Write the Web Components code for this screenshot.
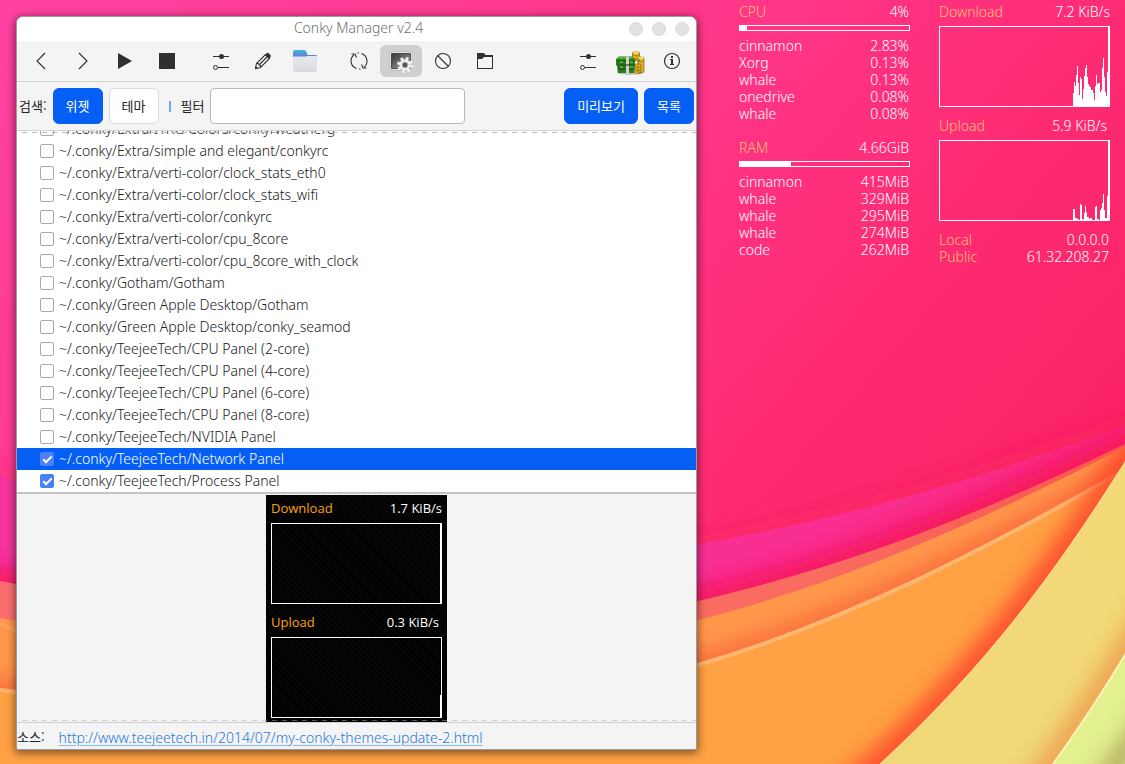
<!DOCTYPE html>
<html lang="ko">
<head>
<meta charset="utf-8">
<title>Conky Manager v2.4</title>
<style>
  html, body { margin: 0; height: 100%; }
  body {
    font: 300 14px/17px "Noto Sans", "Noto Sans CJK KR", sans-serif;
    color: #202020;
    overflow: hidden;
  }
</style>
</head>
<body>
<desk-top>
  <app-window heading="Conky Manager v2.4">
    <tool-bar></tool-bar>
    <filter-bar></filter-bar>
    <widget-list>
      <widget-row>~/.conky/Extra/ITRG Colors/conky/weatherg</widget-row>
      <widget-row>~/.conky/Extra/simple and elegant/conkyrc</widget-row>
      <widget-row>~/.conky/Extra/verti-color/clock_stats_eth0</widget-row>
      <widget-row>~/.conky/Extra/verti-color/clock_stats_wifi</widget-row>
      <widget-row>~/.conky/Extra/verti-color/conkyrc</widget-row>
      <widget-row>~/.conky/Extra/verti-color/cpu_8core</widget-row>
      <widget-row>~/.conky/Extra/verti-color/cpu_8core_with_clock</widget-row>
      <widget-row>~/.conky/Gotham/Gotham</widget-row>
      <widget-row>~/.conky/Green Apple Desktop/Gotham</widget-row>
      <widget-row>~/.conky/Green Apple Desktop/conky_seamod</widget-row>
      <widget-row>~/.conky/TeejeeTech/CPU Panel (2-core)</widget-row>
      <widget-row>~/.conky/TeejeeTech/CPU Panel (4-core)</widget-row>
      <widget-row>~/.conky/TeejeeTech/CPU Panel (6-core)</widget-row>
      <widget-row>~/.conky/TeejeeTech/CPU Panel (8-core)</widget-row>
      <widget-row>~/.conky/TeejeeTech/NVIDIA Panel</widget-row>
      <widget-row checked selected>~/.conky/TeejeeTech/Network Panel</widget-row>
      <widget-row checked>~/.conky/TeejeeTech/Process Panel</widget-row>
    </widget-list>
    <preview-pane>
      <traffic-graph label="Download" value="1.7 KiB/s" bars="80"></traffic-graph>
      <traffic-graph label="Upload" value="0.3 KiB/s" bars="22" inset></traffic-graph>
    </preview-pane>
    <source-bar href="http://www.teejeetech.in/2014/07/my-conky-themes-update-2.html"></source-bar>
  </app-window>
  <conky-panel>
    <usage-block label="CPU" value="4%" percent="4"
      rows="cinnamon:2.83%,Xorg:0.13%,whale:0.13%,onedrive:0.08%,whale:0.08%"></usage-block>
    <usage-block label="RAM" value="4.66GiB" percent="30"
      rows="cinnamon:415MiB,whale:329MiB,whale:295MiB,whale:274MiB,code:262MiB"></usage-block>
  </conky-panel>
  <conky-panel class="network">
    <traffic-graph label="Download" value="7.2 KiB/s"
      bars="13,24,20,31,40,23,11,29,27,7,17,30,38,41,29,22,20,19,16,16,13,6,20,31,22,23,23,14,16,38,48,29,14,10,34,80"></traffic-graph>
    <traffic-graph label="Upload" value="5.9 KiB/s" inset
      bars="11,11,2,2,1,1,0,16,15,1,1,7,14,8,3,3,1,2,2,0,0,0,13,14,1,1,0,10,12,17,26,10,2,2,24,80"></traffic-graph>
    <address-list rows="Local:0.0.0.0,Public:61.32.208.27"></address-list>
  </conky-panel>
</desk-top>

<script>
const define = (name, html, setup) => {
  const template = document.createElement('template');
  customElements.define(name, class extends HTMLElement {
    connectedCallback() {
      if (this.shadowRoot) return;
      template.innerHTML = html;
      this.attachShadow({ mode: 'open' }).append(template.content.cloneNode(true));
      if (setup) setup(this, this.shadowRoot);
    }
  });
};
const pairs = text => text.split(',').map(p => p.split(':'));

define('desk-top', `
<style>
  :host { position: relative; display: flex; align-items: flex-start; box-sizing: border-box;
    height: 100vh; padding: 16px 15px 14px 16px; }
  .wallpaper { position: absolute; inset: 0; width: 100%; height: 100%; }
  ::slotted(app-window) { flex: 1; align-self: stretch; min-width: 0; margin-right: 42px; }
  ::slotted(conky-panel) { flex: none; margin-top: -13px; }
  ::slotted(.network) { margin-left: 29px; }
</style>
<svg class="wallpaper" viewBox="0 0 1125 764" preserveAspectRatio="xMidYMid slice" aria-hidden="true">
  <defs>
    <linearGradient id="pink" x1="0" y1="0" x2="1" y2=".6">
      <stop offset="0" stop-color="#ff42a2"/><stop offset=".5" stop-color="#ff3688"/>
      <stop offset=".75" stop-color="#fe2b73"/><stop offset="1" stop-color="#fa2163"/>
    </linearGradient>
    <linearGradient id="magenta" x1="0" y1="0" x2="1" y2="0">
      <stop offset="0" stop-color="#f5349f"/><stop offset=".65" stop-color="#f92e90"/><stop offset="1" stop-color="#fa2878"/>
    </linearGradient>
    <linearGradient id="salmon" x1="0" y1="0" x2="1" y2="0">
      <stop offset="0" stop-color="#fb6f70"/><stop offset=".65" stop-color="#fa6b60"/><stop offset="1" stop-color="#f84b43"/>
    </linearGradient>
    <linearGradient id="yellow" x1="0" y1="1" x2=".5" y2="0">
      <stop offset="0" stop-color="#eed679"/><stop offset="1" stop-color="#f4d978"/>
    </linearGradient>
    <linearGradient id="fade" x1="0" y1="0" x2="1" y2="0">
      <stop offset="0" stop-color="#f2174e" stop-opacity=".3"/><stop offset=".85" stop-color="#f2174e" stop-opacity=".3"/>
      <stop offset="1" stop-color="#f80b38" stop-opacity=".8"/>
    </linearGradient>
    <filter id="soft" filterUnits="userSpaceOnUse" x="-100" y="0" width="1400" height="1000"><feGaussianBlur stdDeviation="10"/></filter>
    <path id="a" d="M0 475C180 560 480 590 698 544C855 517 990 474 1125 426L1300 360V900H-60V440Z"/>
    <path id="b" d="M0 581C240 625 480 655 698 601C855 564 975 516 1125 444L1300 350V900H-60V570Z"/>
    <path id="c" d="M0 618C240 660 480 680 698 620C840 584 975 524 1125 447L1300 352V900H-60V605Z"/>
    <path id="d" d="M0 690C240 720 480 722 698 665C845 622 985 550 1125 470L1300 370V900H-60V682Z"/>
    <path id="e" d="M740 880L880 764C985 667 1054 575 1125 462L1200 330V880Z"/>
    <path id="f" d="M970 870L1053 764Q1090 713 1125 655L1200 530V870Z"/>
    <clipPath id="inA"><use href="#a"/></clipPath>
    <clipPath id="inC"><use href="#c"/></clipPath>
    <clipPath id="inE"><use href="#e"/></clipPath>
  </defs>
  <rect width="1125" height="764" fill="url(#pink)"/>
  <use href="#a" fill="none" stroke="url(#fade)" stroke-width="20" filter="url(#soft)"/>
  <use href="#a" fill="url(#magenta)"/>
  <g clip-path="url(#inA)"><use href="#b" fill="none" stroke="#f5104a" stroke-width="22" opacity=".8" filter="url(#soft)"/></g>
  <use href="#b" fill="url(#salmon)"/>
  <use href="#c" fill="#ff974b"/>
  <g clip-path="url(#inC)">
    <use href="#d" fill="none" stroke="#f95639" stroke-width="18" opacity=".75" filter="url(#soft)"/>
    <path d="M0 623L20 633" stroke="#ffa360" stroke-width="3"/>
    <use href="#d" fill="#ffa145"/>
    <use href="#d" fill="none" stroke="#ffb671" stroke-width="4"/>
    <use href="#e" fill="none" stroke="#fd4529" stroke-width="30" opacity=".85" filter="url(#soft)"/>
  </g>
  <use href="#e" fill="url(#yellow)" stroke="#fbe6a2" stroke-width="1"/>
  <g clip-path="url(#inE)">
    <use href="#f" fill="none" stroke="#ee9c4d" stroke-width="28" opacity=".85" filter="url(#soft)"/>
    <use href="#f" fill="#e3f08e"/>
    <path d="M1090 800L1155 710" stroke="#a89a58" stroke-width="20" opacity=".8" filter="url(#soft)"/>
    <use href="#f" fill="none" stroke="#fbf3b8" stroke-width="2"/>
  </g>
</svg>
<slot></slot>`);

define('app-window', `
<style>
  :host { position: relative; display: flex; flex-direction: column; box-sizing: border-box;
    border: 1px solid #9c9c9c; border-radius: 7px 7px 2px 2px; background: #f4f4f4; overflow: hidden;
    box-shadow: 0 2px 8px 1px rgba(0,0,0,.5); }
  header { display: grid; grid-template-columns: 1fr auto 1fr; align-items: center; flex: none;
    height: 24px; padding: 0 7px; background: #fff; }
  h1 { grid-column: 2; margin: 0; padding-left: 4px; font: inherit; line-height: 22px; align-self: start; color: #707070; }
  .controls { display: flex; gap: 9px; justify-content: flex-end; }
  .controls button { width: 14px; height: 14px; padding: 0; border: 1px solid #d8d8d8; border-radius: 50%; background: #e2e2e2; }
</style>
<header><h1></h1><div class="controls">
  <button aria-label="최소화"></button><button aria-label="최대화"></button><button aria-label="닫기"></button>
</div></header>
<slot></slot>`, (host, root) => { root.querySelector('h1').textContent = host.getAttribute('heading'); });

const sliders = '<g fill="none" stroke="#303030"><path d="M4 7.5H20M9 18.5H20"/><circle cx="6.500" cy="18.500" r="2"/></g><circle cx="12.500" cy="7.500" r="2.500" fill="#303030"/>';
const icons = {
  back: '<path d="M16 4L8 12L16 20" fill="none" stroke="#303030" stroke-width="1.1"/>',
  forward: '<path d="M8 4L16 12L8 20" fill="none" stroke="#303030" stroke-width="1.1"/>',
  play: '<path d="M5 4L19 12L5 20Z" fill="#303030"/>',
  stop: '<path d="M4 4H20V20H4Z" fill="#303030"/>',
  sliders,
  edit: '<g fill="none" stroke="#303030" stroke-width="1.1"><path d="M4.500 19.500L5.500 14.500L14.500 5.500L18.500 9.500L9.500 18.500Z"/><path d="M5.500 14.500Q8 14 8 16Q10 16 9.500 18.500M8 16L16.500 7.500"/></g><path d="M14 6L16 4Q17 3.500 18 4.500L19.500 6Q20.500 7 19.500 8L18 10ZM4 20L4.600 17L7 19.400Z" fill="#303030"/>',
  folder: '<defs><linearGradient id="g" x1="0" y1="0" x2="0" y2="1"><stop stop-color="#3db8d6"/><stop offset="1" stop-color="#6a6fd6"/></linearGradient><linearGradient id="h" x1="0" y1="0" x2="0" y2="1"><stop stop-color="#e8e8ec"/><stop offset="1" stop-color="#dadbe0"/></linearGradient></defs><path d="M0 3Q0 1 2 1H11Q13 1 13.500 3L14.500 6H23Q24 6 24 7V9H0Z" fill="url(#g)"/><path d="M0 8Q0 7.500 1 7.500H13L14 7H23Q24 7 24 8V21Q24 23 22 23H2Q0 23 0 21Z" fill="url(#h)"/>',
  refresh: '<g fill="none" stroke="#303030" stroke-width="1.1"><path d="M7 5.800A8 8 0 0 0 9.500 19.600M17 18.200A8 8 0 0 0 14.500 4.400"/><path d="M4.500 5H8L9.500 8.500M19.500 19H16L14.500 15.500M10.500 4H12M12 20H13.500"/></g>',
  desktop: '<defs><linearGradient id="s" x1="0" y1="0" x2="1" y2="1"><stop stop-color="#333"/><stop offset="1" stop-color="#aaa"/></linearGradient></defs><path d="M1 3H23V21H1Z" fill="#f8f8f8" stroke="#aaa" stroke-width=".6"/><path d="M2.500 4.500H21.500V19.500H2.500Z" fill="url(#s)" stroke="#333" stroke-width=".8"/><g transform="translate(16 16)"><circle r="6" fill="#eee" stroke="#888" stroke-width=".5"/><circle r="6.500" fill="none" stroke="#f2f2f2" stroke-width="3" stroke-dasharray="2.600 2.500"/><circle r="2.800" fill="#555" stroke="#aaa"/></g>',
  disable: '<g fill="none" stroke="#303030" stroke-width="1.1"><circle cx="12" cy="12" r="7.500"/><path d="M6.500 6.500L17.500 17.500"/></g>',
  open: '<path d="M4 4H11L12.500 6H20V20H4Z" fill="#303030"/><path d="M5 10H9L11 8H19V19H5Z" fill="#f4f4f4"/>',
  donate: '<ellipse cx="12" cy="23" rx="13" ry="3" fill="#000" opacity=".2"/><g fill="#dfb125" stroke="#8b6d12" stroke-width=".7"><path d="M14.500 3.500Q18 1 21.500 3.500V12H14.500ZM20 9Q23 6.500 26 9V23Q23 25 20 23ZM17 15.500Q20 13.500 23 15.500V24Q20 26 17 24Z"/><path d="M14.500 6Q18 8 21.500 6M14.500 9Q18 11 21.500 9M20 12Q23 14 26 12M17 18Q20 20 23 18M17 21Q20 23 23 21" fill="none"/></g><ellipse cx="18" cy="3.500" rx="3" ry="1.300" fill="#f5de7c"/><ellipse cx="23" cy="9" rx="2.600" ry="1.200" fill="#f5de7c"/><path d="M-2 10L1 7.500H14L17 10V16L16 24H0L-1 17L-2 16Z" fill="#2c7d18"/><path d="M-1 10L1 8H14L16 10Z" fill="#55ae38"/><path d="M-1 12H16M0 16H16M0 20H16" stroke="#164f0c"/><path d="M2 13H5M12 13H15M2 18H5M12 18H15" stroke="#68b84c" stroke-width="1.500"/><path d="M8 7.500H11V25H8Z" fill="#d0d0d0"/><path d="M8 16H11" stroke="#777" stroke-width="2"/>',
  info: '<circle cx="12" cy="12" r="7.500" fill="none" stroke="#303030" stroke-width="1.200"/><path d="M11 7H13V9H11ZM10 10H13V15H14V16H10V15H11V11H10Z" fill="#303030"/>'
};
const tool = (icon, label, active = '') =>
  `<button class="${active}" title="${label}" aria-label="${label}"><svg viewBox="0 0 24 24" aria-hidden="true">${icons[icon]}</svg></button>`;

define('tool-bar', `
<style>
  :host { display: flex; flex: none; gap: 12px; padding: 4px 3px; height: 32px; border-bottom: 1px solid #d3d3d3; }
  div { display: flex; }
  .end { margin-left: auto; }
  button { display: grid; place-items: center; width: 42px; height: 32px; padding: 0; border: 0; border-radius: 6px; background: none; }
  .active { background: #cfcfcf; }
  svg { width: 24px; height: 24px; overflow: visible; }
</style>
<div>${tool('back', '이전')}${tool('forward', '다음')}${tool('play', '시작')}${tool('stop', '중지')}</div>
<div>${tool('sliders', '위젯 설정')}${tool('edit', '편집')}${tool('folder', '폴더 열기')}</div>
<div>${tool('refresh', '새로 고침')}${tool('desktop', '미리보기 생성', 'active')}${tool('disable', '모두 중지')}${tool('open', '테마 가져오기')}</div>
<div class="end">${tool('sliders', '설정')}${tool('donate', '기부')}${tool('info', '정보')}</div>`);

define('filter-bar', `
<style>
  :host { display: flex; flex: none; align-items: center; padding: 6px 2px; gap: 6px; border-bottom: 1px solid #d3d3d3;
    font-family: "Noto Sans CJK KR", sans-serif; font-size: 13px; font-weight: 400; }
  span, label { padding-bottom: 2px; }
  button { box-sizing: border-box; height: 36px; padding: 0 12px 2px; border: 1px solid #dadada; border-radius: 6px;
    background: #fff; color: inherit; font: inherit; min-width: 50px; }
  button.on { background: #065ff4; border-color: #065ff4; color: #fff; }
  i { width: 2px; height: 11px; margin: 0 4px; background: #6aabf0; }
  input { box-sizing: border-box; flex: 0 1 255px; min-width: 0; height: 36px; padding: 0 8px; border: 1px solid #b8b8b8;
    border-radius: 4px; background: #fff; font: inherit; }
  .end { display: flex; gap: 6px; margin-left: auto; }
</style>
<span>검색:</span>
<button class="on">위젯</button><button>테마</button>
<i></i>
<label for="filter">필터</label><input id="filter" type="text">
<div class="end"><button class="on">미리보기</button><button class="on">목록</button></div>`);

define('widget-list', `
<style>
  :host { position: relative; display: flex; flex-direction: column; justify-content: flex-end; flex: 1 1 0; min-height: 0;
    overflow: hidden; background: #fff; border-bottom: 2px solid #c4c4c4; }
  :host::before { content: ""; position: absolute; z-index: 1; inset: 1px 0 auto; height: 1px;
    background: repeating-linear-gradient(90deg, transparent 0 5px, #b9b9b9 5px 10px); }
</style>
<slot></slot>`);

define('widget-row', `
<style>
  :host { display: block; flex: none; }
  label { display: flex; align-items: center; gap: 5px; height: 22px; padding-left: 23px; white-space: nowrap; }
  span { padding-bottom: 2px; }
  :host([selected]) label { background: #065ff4; color: #fff; }
  input { appearance: none; box-sizing: border-box; width: 14px; height: 14px; margin: 0; border: 1px solid #a9a9a9;
    border-radius: 2px; background: #fff; display: grid; place-items: center; }
  input:checked { border-color: #4c80f5; background: #4c80f5; }
  input:checked::before { content: ""; width: 7px; height: 3px; margin-bottom: 2px; border: solid #fff; border-width: 0 0 2px 2px; transform: rotate(-45deg); }
</style>
<label><input type="checkbox"><span><slot></slot></span></label>`,
(host, root) => { root.querySelector('input').checked = host.hasAttribute('checked'); });

define('preview-pane', `
<style>
  :host { position: relative; display: flex; flex: none; justify-content: center; padding-top: 1px;
    border-bottom: 1px solid #d0d0d0;
    --label: #ffa20d; font: 400 13px/17px "Open Sans", "Noto Sans", sans-serif; }
  :host::after { content: ""; position: absolute; inset: auto 0 1px; height: 1px;
    background: repeating-linear-gradient(90deg, transparent 0 5px, #a9a9a980 5px 10px); }
  section { display: grid; gap: 10px; padding: 5px 5px 4px; color: #fff;
    background: repeating-linear-gradient(45deg, #000 0 2px, #070707 2px 4px); }
</style>
<section><slot></slot></section>`);

define('source-bar', `
<style>
  :host { display: flex; flex: none; align-items: center; gap: 14px; height: 26px; }
  span { font-family: "Noto Sans CJK KR", sans-serif; font-size: 13px; font-weight: 400; }
  a { color: #1f78e0; padding-top: 2px; text-underline-offset: 2px; text-decoration-color: #8ab9f1; }
</style>
<span>소스:</span><a></a>`,
(host, root) => {
  const link = root.querySelector('a');
  link.href = link.textContent = host.getAttribute('href');
});

define('conky-panel', `
<style>
  :host { position: relative; display: grid; gap: 17px; width: 171px; color: #fff; --label: #ffc274; }
  :host(.network) { gap: 10px; }
</style>
<slot></slot>`);

define('usage-block', `
<style>
  :host { display: block; }
  .title, li { display: flex; justify-content: space-between; padding-right: 1px; }
  .title span:first-child { color: var(--label); }
  .meter { box-sizing: border-box; height: 6px; margin: 5px 0 6px; border: 1px solid #fff; }
  .fill { height: 4px; background: #fff; }
  ul { margin: 0; padding: 0; list-style: none; }
</style>
<div class="title"><span></span><span></span></div>
<div class="meter"><div class="fill"></div></div>
<ul></ul>`, (host, root) => {
  const [label, value] = root.querySelectorAll('span');
  label.textContent = host.getAttribute('label');
  value.textContent = host.getAttribute('value');
  root.querySelector('.fill').style.width = host.getAttribute('percent') + '%';
  root.querySelector('ul').innerHTML = pairs(host.getAttribute('rows'))
    .map(([name, amount]) => `<li><span>${name}</span><span>${amount}</span></li>`).join('');
});

define('traffic-graph', `
<style>
  :host { display: block; width: 171px; }
  div { display: flex; justify-content: space-between; margin-bottom: 6px; }
  :host([inset]) div { padding-right: 3px; }
  span:first-child { color: var(--label); }
  svg { display: block; width: 171px; height: 81px; }
</style>
<div><span></span><span></span></div>
<svg viewBox="0 0 171 81" shape-rendering="crispEdges" aria-hidden="true"></svg>`, (host, root) => {
  const [label, value] = root.querySelectorAll('span');
  label.textContent = host.getAttribute('label');
  value.textContent = host.getAttribute('value');
  const bars = host.getAttribute('bars').split(',').map(Number);
  const start = 170 - bars.length;
  root.querySelector('svg').innerHTML =
    '<path d="M0 0H171V81H0ZM1 1V80H170V1Z" fill="#fff" fill-rule="evenodd"/>' +
    bars.map((h, i) => `<rect x="${start + i}" y="${80 - h}" width="1" height="${h}" fill="#fff"/>`).join('');
});

define('address-list', `
<style>
  dl { display: grid; grid-template-columns: auto auto; justify-content: space-between; margin: 0; }
  :host { display: block; }
  dt { color: var(--label); }
  dd { margin: 0; text-align: right; padding-right: 1px; }
</style>
<dl></dl>`, (host, root) => {
  root.querySelector('dl').innerHTML = pairs(host.getAttribute('rows'))
    .map(([name, address]) => `<dt>${name}</dt><dd>${address}</dd>`).join('');
});
</script>
</body>
</html>
